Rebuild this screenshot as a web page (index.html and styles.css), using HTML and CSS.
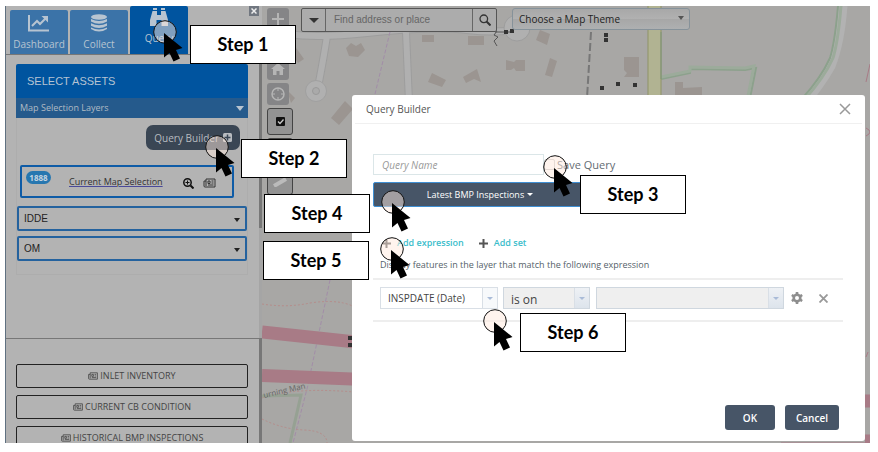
FILE: index.html
```html
<!DOCTYPE html>
<html lang="en">
<head>
<meta charset="utf-8">
<title>Query Builder</title>
<link rel="stylesheet" href="styles.css">
</head>
<body>
<svg class="defs" aria-hidden="true">
  <symbol id="card" viewBox="0 0 12 10"><path d="M2.5 1h9v8h-10q-1 0-1-1V3h2M2.500 1v7M4.500 3h2v2.500h-2zM8 3h2M8 5h2M4.500 7h5.500" fill="none" stroke="currentColor"/></symbol>
  <symbol id="pointer" viewBox="0 0 34 44"><circle cx="12" cy="12" r="11.300" fill="#ffeade" fill-opacity=".5" stroke="#111"/><path d="M11 13v24.500l5.500-4.500 4 8.500 6.500-3-4-8.500 6.500-2z" fill="#000"/></symbol>
</svg>
<div class="app">
  <aside class="sidebar">
    <nav class="tabs">
      <button class="tab"><svg width="22" height="18" viewBox="0 0 22 18"><path d="M1 1v15.500h20M4 12l5-5 3 3 6-6" fill="none" stroke="currentColor" stroke-width="2"/><path d="M13.500 2H20v6.500z" fill="currentColor"/></svg>Dashboard</button>
      <button class="tab"><svg width="18" height="18" viewBox="0 0 18 18" fill="currentColor"><ellipse cx="9" cy="3" rx="8" ry="2.800"/><path d="M1 5q8 4 16 0v2.500q-8 4.500-16 0zM1 9.300q8 4 16 0v2.400q-8 4.500-16 0zM1 13.500q8 4 16 0v1.500q-8 5-16 0z"/></svg>Collect</button>
      <button class="tab active"><svg width="20" height="18" viewBox="0 0 20 18" fill="currentColor"><path d="M4 0h4v2H4zM12 0h4v2h-4zM3.500 3H8v4h4V3h4.500L19 12v6h-6.500v-6H7.500v6H1v-6z"/></svg>Query</button>
      <button class="close" aria-label="Close panel"><svg width="6" height="6" viewBox="0 0 6 6"><path d="M.500.500l5 5M5.500.500l-5 5" stroke="#eee" stroke-width="1.500"/></svg></button>
    </nav>
    <section class="assets">
      <h2>SELECT ASSETS</h2>
      <button class="layers">Map Selection Layers<i class="caret"></i></button>
      <div class="assets-body">
        <button class="builder">Query Builder <svg width="9" height="9" viewBox="0 0 9 9"><rect width="9" height="9" rx="1.500" fill="currentColor"/><path d="M4.500 1.500v6M1.500 4.500h6" stroke="#3a4654" stroke-width="1.500"/></svg></button>
        <div class="selection">
          <span class="badge">1888</span>
          <a href="#">Current Map Selection</a>
          <svg class="zoom" width="11" height="11" viewBox="0 0 11 11" fill="none" stroke="#111"><circle cx="4.500" cy="4.500" r="3.700" stroke-width="1.500"/><path d="M7.500 7.500l3 3" stroke-width="2"/><path d="M2.500 4.500h4M4.500 2.500v4"/></svg>
          <svg class="news" width="13" height="10"><use href="#card"/></svg>
        </div>
        <span class="group"><select aria-label="IDDE"><option>IDDE</option></select></span>
        <span class="group"><select aria-label="OM"><option>OM</option></select></span>
      </div>
    </section>
    <section class="reports">
      <button><svg width="10" height="8"><use href="#card"/></svg>INLET INVENTORY</button>
      <button><svg width="10" height="8"><use href="#card"/></svg>CURRENT CB CONDITION</button>
      <button><svg width="10" height="8"><use href="#card"/></svg>HISTORICAL BMP INSPECTIONS</button>
    </section>
  </aside>

  <main class="map">
    <svg class="terrain" viewBox="262 6 608 437" preserveAspectRatio="xMinYMin slice" aria-hidden="true">
      <rect x="262" y="6" width="608" height="437" fill="#a8a7a5"/>
      <g fill="none">
        <path d="M262 30q40 10 105 3t100-3 55-2M327 36q-3 20-8 46M406 32l3 70" stroke="#9d9d9d" stroke-width="8"/>
        <path d="M262 30q40 10 105 3t100-3 55-2M327 36q-3 20-8 46M406 32l3 70" stroke="#b0b0b0" stroke-width="6"/>
        <circle cx="517" cy="28" r="13" fill="#b0b0b0" stroke="#9d9d9d"/>
        <circle cx="316" cy="91" r="10.500" fill="#b0b0b0" stroke="#a0a0a0"/><circle cx="316" cy="91" r="3.500" fill="#aaa" stroke="#999"/>
        <path d="M843 6q-3 38-12 60-10 18-30 42" stroke="#b2b2b2" stroke-width="9"/>
        <path d="M838 6q-3 36-8 52-9 20-29 42M661 79l29-6v-4l55 1 11-2-6 30" stroke="#8ca18c" stroke-width="2"/>
        <path d="M841 6q-3 36-8 52-9 20-29 42M661 77l29-6v-4l55 1 9-2-6 30" stroke="#9cab9b" stroke-width="3"/>
        <path d="M654.500 6v94" stroke="#8e9367" stroke-width="14"/><path d="M654.500 6v94" stroke="#b1b392" stroke-width="12"/>
        <path d="M661 32v47" stroke="#7f957b"/>
        <path d="M591 32l-4 66" stroke="#777" stroke-width="2" stroke-dasharray="8 3"/>
        <path d="M390 32l-15 62M330 280l-22 105-15 58" stroke="#a28da8" stroke-dasharray="4 2"/>
        <path d="M497 31l-3 4 4 2-4 4 3 5M495 32h19" stroke="#555"/>
        <path d="M262 304q25 4 48-1 40-6 54 12M262 398q35-12 103-5M262 419q20 10 42 11 23 1 23 13M365 398q-14 12-10 25t10 16" stroke="#b58d8b" stroke-dasharray="2 2"/>
        <path d="M262 332l103 11M262 375.500l103 4M865 401h6M865 441h6" stroke="#a87b86" stroke-width="13"/>
        <path d="M262 396l39-1-11 48" stroke="#96a193" stroke-width="3"/>
        <path d="M866 82l4-18M866 128q8 4 0 8M868 352l-2 5M781 443h90" stroke="#a87b86"/>
      </g>
      <g fill="#9b9591"><path d="M346 48l5-5 5 3 5-3 4 7-7 7-9-1zM422 35h12v7h-12zM468 36h16v9h-16zM432 73l14 7-4 7-14-5zM463 77l14-8 4 13-7-3-8 4zM506 60l8 2 2-2h9v11h-9l-2-3-3 2h-5zM540 30l10 4-3 11-11-5zM550 58l7 3-5 16-7-2zM624 57h15v20h-15l3-4-3-3zM675 82h8v6l19-1v11h-27zM294 45l10 14-6 4-10-15zM345 101l8 8-14 16-8-7zM287 90l8 8-4 5z"/></g>
      <g fill="#333"><path d="M504 30h4v4h-4zM510 29h4v4h-4zM604 33h4v4h-4zM604 38h4v4h-4zM600 86h4v4h-4zM616 82h4v4h-4zM633 83h4v4h-4zM348 336h4v4h-4zM348 343h4v4h-4z"/></g>
      <text class="trail" transform="translate(264 398) rotate(-13)">urning Man</text>
    </svg>
    <div class="tools">
      <button aria-label="Zoom in"><svg width="12" height="12" viewBox="0 0 12 12"><path d="M6 0v12M0 6h12" stroke="#b5b5b5" stroke-width="2"/></svg></button>
      <button aria-label="Zoom out"><svg width="12" height="12" viewBox="0 0 12 12"><path d="M0 6h12" stroke="#b5b5b5" stroke-width="2"/></svg></button>
      <button aria-label="Home"><svg width="14" height="12" viewBox="0 0 14 12"><path d="M7 0l7 6h-2v6H8.500V8h-3v4H2V6H0z" fill="#b5b5b5"/></svg></button>
      <button aria-label="Locate"><svg width="14" height="14" viewBox="0 0 14 14" fill="none" stroke="#b5b5b5"><circle cx="7" cy="7" r="6" stroke-width="1.500"/><path d="M7 1v3M7 10v3M1 7h3M10 7h3"/></svg></button>
      <button class="wide" aria-label="Select"><svg width="9" height="9" viewBox="0 0 9 9"><rect width="9" height="9" rx="1" fill="#111"/><path d="M2 4.500l2 2 3.500-4" fill="none" stroke="#ccc" stroke-width="1.300"/></svg></button>
      <button class="wide" aria-label="Layers"></button>
      <button class="wide" aria-label="Measure"><svg width="14" height="10" viewBox="0 0 14 10"><path d="M1 9l12-7" stroke="#bbb" stroke-width="4"/></svg></button>
    </div>
    <div class="mapbar">
      <div class="search">
        <button aria-label="Search source"><i class="caret dark"></i></button>
        <input type="text" placeholder="Find address or place" aria-label="Find address or place">
        <button aria-label="Search"><svg width="12" height="12" viewBox="0 0 12 12" fill="none" stroke="#333"><circle cx="4.800" cy="4.800" r="3.800" stroke-width="1.300"/><path d="M7.500 7.500l4 4" stroke-width="2"/></svg></button>
      </div>
      <select class="theme" aria-label="Map theme"><option>Choose a Map Theme</option></select>
    </div>
  </main>

  <div class="dialog" role="dialog" aria-labelledby="dialog-title">
    <header><h1 id="dialog-title">Query Builder</h1><button class="plain" aria-label="Close"><svg width="12" height="12" viewBox="0 0 12 12"><path d="M1 1l10 10M11 1L1 11" stroke="#999" stroke-width="1.500"/></svg></button></header>
    <div class="dialog-body">
      <div class="name-row">
        <input class="name" type="text" placeholder="Query Name" aria-label="Query Name">
        <label><input type="checkbox">Save Query</label>
      </div>
      <button class="layer">Latest BMP Inspections<i class="caret light"></i></button>
      <div class="add-row">
        <button class="add"><svg width="9" height="9" viewBox="0 0 9 9"><path d="M4.500 0v9M0 4.500h9" stroke="#555" stroke-width="2"/></svg>Add expression</button>
        <button class="add"><svg width="9" height="9" viewBox="0 0 9 9"><path d="M4.500 0v9M0 4.500h9" stroke="#555" stroke-width="2"/></svg>Add set</button>
      </div>
      <p>Display features in the layer that match the following expression</p>
      <div class="expression">
        <span class="combo field"><select aria-label="Field"><option>INSPDATE (Date)</option></select></span>
        <span class="combo operator"><select aria-label="Operator"><option>is on</option></select></span>
        <span class="combo value"><select aria-label="Value"><option></option></select></span>
        <button class="plain gear" aria-label="Settings"><svg width="12" height="12" viewBox="0 0 12 12"><circle cx="6" cy="6" r="3.300" fill="none" stroke="#8e8e8e" stroke-width="2.600"/><path d="M6 0v2.500M6 9.500V12M.800 3l2.200 1.300M9 7.700L11.200 9M.800 9L3 7.700M9 4.300L11.200 3" stroke="#8e8e8e" stroke-width="2.600"/></svg></button>
        <button class="plain" aria-label="Remove"><svg width="9" height="9" viewBox="0 0 9 9"><path d="M.500.500l8 8M8.500.500l-8 8" stroke="#999" stroke-width="1.800"/></svg></button>
      </div>
    </div>
    <footer><button>OK</button><button>Cancel</button></footer>
  </div>
</div>

<div class="callouts">
  <svg class="pointer p1"><use href="#pointer"/></svg><div class="step s1">Step 1</div>
  <svg class="pointer p2"><use href="#pointer"/></svg><div class="step s2">Step 2</div>
  <svg class="pointer p3"><use href="#pointer"/></svg><div class="step s3">Step 3</div>
  <svg class="pointer p4"><use href="#pointer"/></svg><div class="step s4">Step 4</div>
  <svg class="pointer p5"><use href="#pointer"/></svg><div class="step s5">Step 5</div>
  <svg class="pointer p6"><use href="#pointer"/></svg><div class="step s6">Step 6</div>
</div>
</body>
</html>
```
FILE: styles.css
```css
* { box-sizing: border-box; }
body {
  margin: 0;
  padding: 6px 8px 9px 5px;
  height: 100vh;
  overflow: hidden;
  background: #fff;
  font: 11px/16px "Open Sans", sans-serif;
  color: #444;
}
button, input, select { font: inherit; color: inherit; margin: 0; padding: 0; border: 0; background: none; appearance: none; }
button { white-space: nowrap; }
h1, h2, p { margin: 0; font-weight: 400; }
.defs { position: absolute; width: 0; height: 0; }

.app { position: relative; display: grid; grid-template-columns: 257px 1fr; height: 100%; overflow: hidden; }
.caret { border: 4px solid transparent; border-top: 5px solid #b8c4d0; border-bottom: 0; }
.caret.dark { border-width: 5px 5px 0; border-top-color: #333; }
.caret.light { border-width: 3px 3px 0; border-top-color: #fff; margin-left: 3px; }

/* Sidebar */
.sidebar { display: flex; flex-direction: column; min-height: 0; overflow: hidden; padding-right: 3px; border-left: 1px solid #5f7080;
  background: linear-gradient(#b3b3b3 49px, #777 49px 222px, #a5a5a5 222px 332px, #777 332px) right / 3px 100% no-repeat #b3b3b3; }
.tabs { display: flex; align-items: flex-end; gap: 2px; height: 49px; padding-left: 4px; border-bottom: 1px solid #777; flex: none; }
.tab { display: flex; flex-direction: column; align-items: center; justify-content: flex-end; gap: 4px; width: 58px; height: 44px; padding-bottom: 2px; border-radius: 2px 2px 0 0; background: #3b73a8; color: #b7c4d1; font-size: 10px; }
.tab.active { height: 48px; padding-bottom: 8px; background: #00549f; }
.close { display: grid; place-items: center; align-self: flex-start; width: 10px; height: 10px; margin-left: auto; background: #717780; }
.assets { flex: 1 0 283px; padding: 9px 11px 0 10px; }
.assets h2 { height: 34px; padding-left: 11px; border-radius: 2px 2px 0 0; background: #00549f; color: #b5c3d2; font: 11px/34px "Liberation Sans", sans-serif; }
.layers { display: flex; align-items: center; justify-content: space-between; width: 100%; height: 20px; padding: 0 4px; background: #255a8c; color: #b0bac4; font-size: 9px; }
.assets-body { display: flex; flex-direction: column; padding: 7px 0 0; border: 1px solid #adadad; border-top: 0; height: 157px; }
.builder { align-self: flex-end; display: flex; align-items: center; gap: 4px; height: 25px; margin-right: 7px; padding: 0 8px; border-radius: 7px; background: #3a4654; color: #b9bcc0; font-size: 10px; }
.selection { display: flex; align-items: center; height: 33px; margin: 15px 13px 8px 3px; padding: 0 9px 0 4px; border: 2px solid #0e5ba6; border-radius: 2px; font-size: 9px; }
.badge { align-self: flex-start; width: 25px; margin-top: 4px; border-radius: 7px; background: #2777b0; color: #c6d5e0; font-weight: 700; font-size: 8px; line-height: 13px; text-align: center; }
.selection a { margin-left: 18px; color: #333; text-decoration-color: #4a4a9a; }
.zoom { margin: 3px 9px 0 auto; }
.news { margin: 3px 7px 0 0; color: #333; }
.group { position: relative; height: 25px; margin-bottom: 5px; border: 2px solid #24629e; border-radius: 2px; color: #222; font: 10px/16px "Liberation Sans", sans-serif; }
.group select { width: 100%; height: 21px; padding-left: 5px; }
.group::after { content: ""; position: absolute; right: 5px; top: 10px; border: solid transparent; border-width: 4px 3px 0; border-top-color: #222; pointer-events: none; }
.reports { display: flex; flex-direction: column; gap: 7px; padding: 25px 11px 0 10px; border-top: 1px solid #777; flex: none; height: 105px; }
.reports button { display: flex; align-items: center; justify-content: center; gap: 2px; flex: none; height: 24px; border: 1px solid #222; border-radius: 2px; font-size: 9px; line-height: 8px; color: #444; }

/* Map */
.map { position: relative; display: flex; align-items: flex-start; gap: 8px; padding: 2px 0 0 5px; min-width: 0; overflow: hidden; background: #a8a7a5; }
.terrain { position: absolute; inset: 0; width: 100%; height: 100%; }
.trail { font: 8px "Open Sans", sans-serif; fill: #666; }
.tools { position: relative; display: flex; flex-direction: column; gap: 3px; width: 26px; }
.tools button { display: grid; place-items: center; width: 22px; height: 22px; border-radius: 3px; background: #858587; }
.tools .wide { width: 26px; height: 27px; border: 1px solid #444; background: #939393; }
.mapbar { position: relative; display: flex; gap: 15px; }
.search { display: flex; width: 196px; height: 24px; border: 1px solid #555; border-radius: 2px; background: #acacac; }
.search button { display: grid; place-items: center; width: 23px; flex: none; }
.search input { flex: 1; min-width: 0; padding-left: 8px; border: solid #666; border-width: 0 1px; font: 10px/16px "Liberation Sans", sans-serif; }
.search input::placeholder { color: #666; }
.theme { width: 178px; height: 22px; padding-left: 6px; border: 1px solid #86929a; border-radius: 3px; color: #222; font-size: 10px; background: linear-gradient(#a8a8a8, #b1b1b1 50%, #a7a7a7 52%, #aeb0b1); position: relative; }
.mapbar::after { content: ""; position: absolute; right: 6px; top: 8px; border: solid transparent; border-width: 4px 3px 0; border-top-color: #555; }

/* Dialog over the map */
.dialog { position: absolute; left: 347px; right: 5px; top: 89px; bottom: 2px; display: flex; flex-direction: column; border-radius: 3px; background: #fff; }
.dialog header { display: flex; align-items: center; justify-content: space-between; height: 29px; margin: 0 3px; padding: 0 11px; border-bottom: 1px solid #f0f0f0; }
.dialog h1 { font-size: 10px; color: #555; }
.plain { display: grid; place-items: center; }
.dialog-body { flex: 1; padding: 30px 22px 0 21px; }
.name-row { display: flex; align-items: center; }
.name { width: 171px; height: 21px; padding-left: 8px; border: 1px solid #dbe6e8; font-style: italic; font-size: 10px; }
.name::placeholder { color: #999; }
.name-row label { display: flex; align-items: center; gap: 2px; font-size: 11px; color: #646b73; }
.name-row label input { width: 11px; height: 11px; border: 1px solid #ccc; border-radius: 2px; }
.layer { display: flex; align-items: center; justify-content: center; width: 214px; height: 25px; margin-top: 7px; border: 1px solid #3f8fd3; border-radius: 2px; background: #475567; color: #fff; font-size: 9px; }
.add-row { display: flex; gap: 15px; margin: 28px 0 6px 9px; }
.add { display: flex; align-items: center; gap: 6px; color: #3bbdcb; font-size: 9px; font-weight: 600; }
.dialog-body p { padding-left: 7px; font-size: 9px; color: #555f6a; }
.expression { display: flex; align-items: center; height: 44px; margin-top: 5px; padding: 0 15px 4px 7px; border: solid #eee; border-width: 2px 0; }
.combo { position: relative; height: 22px; border: 1px solid #d9dfe6; }
.combo select { width: 100%; height: 20px; padding-left: 7px; }
.combo::after { content: ""; position: absolute; pointer-events: none; right: 0; top: 0; bottom: 0; width: 14px; border-left: 1px solid #d9dfe6; background: #f7f9fb; }
.combo::before { content: ""; position: absolute; z-index: 1; pointer-events: none; right: 4px; top: 9px; border: solid transparent; border-width: 3px 3px 0; border-top-color: #a9bbd8; }
.field { width: 118px; margin-right: 5px; font-size: 10px; }
.operator, .value { background: #efefef; border-color: #cfd7df; }
.operator::after, .value::after { background: linear-gradient(#eef1f5, #dde4ec); }
.operator { width: 87px; margin-right: 6px; font-size: 12px; }
.operator select { padding-top: 3px; }
.value { flex: 1; margin-right: 7px; }
.gear { margin-right: 16px; }
.dialog footer { display: flex; justify-content: flex-end; gap: 10px; padding: 0 26px 11px; }
.dialog footer button { min-width: 50px; height: 25px; padding: 0 11px; border-radius: 3px; background: #475567; color: #fff; font-size: 10px; font-weight: 600; }

/* Numbered callouts placed freely over the screen */
.step { position: absolute; width: 106px; height: 39px; border: 1px solid #000; background: #fff; color: #000; font: 700 18px/37px Lato, sans-serif; text-align: center; }
.pointer { position: absolute; width: 34px; height: 44px; }
.s1 { left: 190px; top: 25px; } .p1 { left: 153px; top: 20px; }
.s2 { left: 241px; top: 139px; } .p2 { left: 205px; top: 135px; }
.s3 { left: 580px; top: 175px; } .p3 { left: 543px; top: 155px; }
.s4 { left: 264px; top: 194px; } .p4 { left: 381px; top: 190px; }
.s5 { left: 263px; top: 241px; } .p5 { left: 380px; top: 237px; }
.s6 { left: 520px; top: 313px; } .p6 { left: 483px; top: 309px; }
```
